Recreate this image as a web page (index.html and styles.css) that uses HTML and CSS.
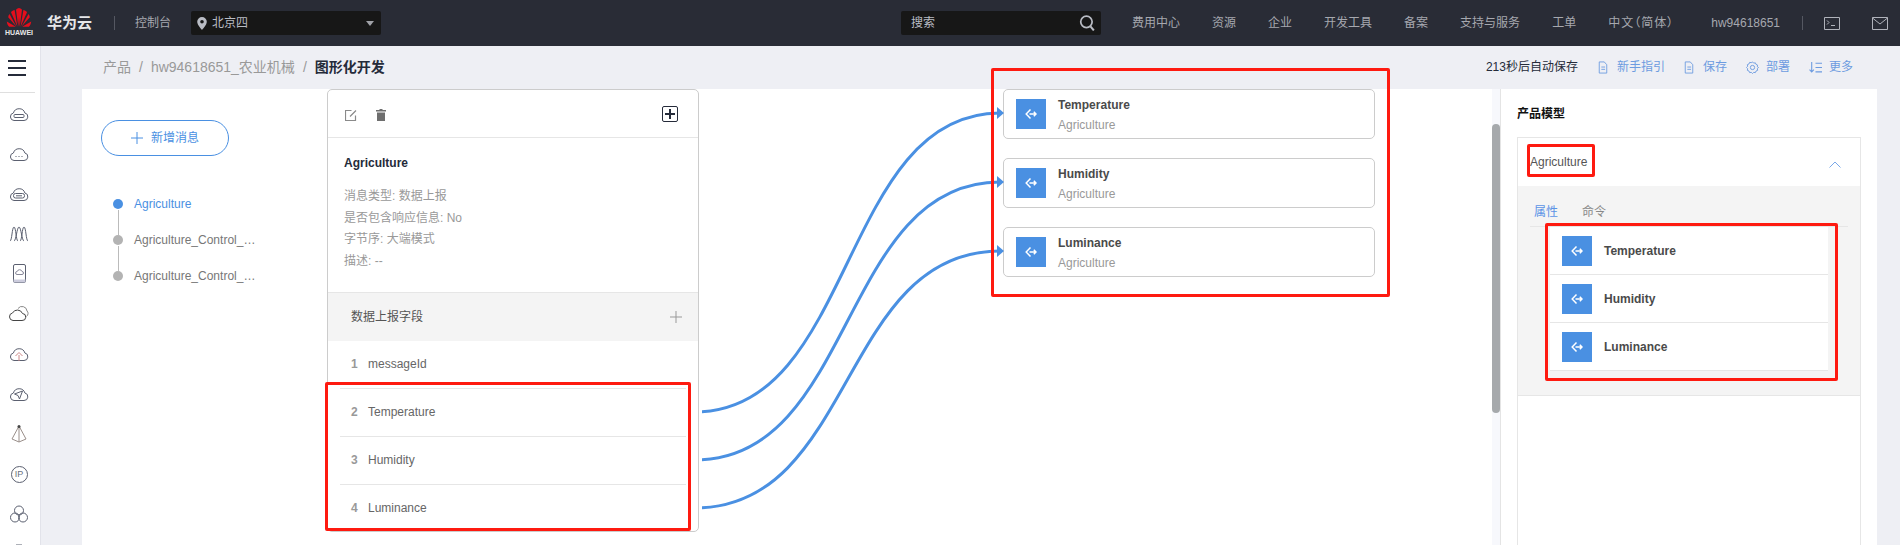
FILE: index.html
```html
<!DOCTYPE html>
<html lang="zh">
<head>
<meta charset="utf-8">
<title>图形化开发</title>
<link rel="stylesheet" href="styles.css">
</head>
<body>
<svg class="defs" width="0" height="0" aria-hidden="true">
  <defs>
    <symbol id="prop" viewBox="0 0 12 12">
      <path d="M5.500 1.500 1.200 6l4.300 4.500M4.500 6H11M8.800 3.800 11 6 8.800 8.200" fill="none" stroke="#fff" stroke-width="1.500"/>
    </symbol>
    <symbol id="cloud" viewBox="0 0 20 16">
      <path d="M5 14.500h10a3.800 3.800 0 0 0 .9-7.500A6 6 0 0 0 4.400 7 3.800 3.800 0 0 0 5 14.500z" fill="none" stroke="#5b6070"/>
    </symbol>
    <symbol id="doc" viewBox="0 0 12 14" preserveAspectRatio="none">
      <path d="M1.500 1h6l3 3v9h-9zM4 6.500h4.500M4 9h4.500" fill="none" stroke="#6c9be0"/>
    </symbol>
  </defs>
</svg>

<header class="topbar">
  <div class="brand">
    <svg class="logo" viewBox="0 0 26 17" preserveAspectRatio="none" aria-hidden="true">
      <g fill="#e60f1d">
        <path d="M12.300 16 10 1.500C11 .5 12 .2 13 0c.5 3-.2 11-.7 16z"/>
        <path d="M13.700 16 16 1.500c-1-1-2-1.300-3-1.500-.5 3 .2 11 .7 16z"/>
        <path d="M11.400 16 5 3.600C6 2.600 7.400 2 8.600 1.800z"/>
        <path d="M14.600 16 21 3.600C20 2.600 18.600 2 17.400 1.800z"/>
        <path d="M10.500 16 2.200 7.800C2.300 6.800 2.700 6 3.500 5.200z"/>
        <path d="M15.500 16l8.300-8.200c-.1-1-.5-1.800-1.300-2.600z"/>
        <path d="M9.800 16 .8 11.500c.1 1.500.8 3 2.300 4.500z"/>
        <path d="M16.200 16l9-4.500c-.1 1.500-.8 3-2.300 4.500z"/>
      </g>
    </svg>
    <span class="logo-word">HUAWEI</span>
  </div>
  <span class="cloud-name">华为云</span>
  <span class="bar-rule"></span>
  <span class="console">控制台</span>
  <div class="region">
    <svg class="pin" viewBox="0 0 10 13" aria-hidden="true"><path d="M5 0a4.800 4.800 0 0 0-4.800 4.800C.2 8 5 13 5 13s4.800-5 4.800-8.200A4.800 4.800 0 0 0 5 0zm0 6.600a1.800 1.800 0 1 1 0-3.600 1.800 1.800 0 0 1 0 3.600z" fill="#b9bcc4"/></svg>
    <span class="region-name">北京四</span>
    <span class="caret"></span>
  </div>
  <div class="search">
    <span>搜索</span>
    <svg class="mag" viewBox="0 0 14 14" aria-hidden="true"><circle cx="6.500" cy="6" r="5" fill="none" stroke="#b9bcc4" stroke-width="1.500"/><path d="m10 10 3 3.500" stroke="#b9bcc4" stroke-width="1.800"/></svg>
  </div>
  <nav class="nav">
    <a>费用中心</a><a>资源</a><a>企业</a><a>开发工具</a><a>备案</a><a>支持与服务</a><a>工单</a><a class="lang">中文（简体）</a>
  </nav>
  <span class="user">hw94618651</span>
  <span class="bar-rule user-rule"></span>
  <svg class="bar-icon term" viewBox="0 0 16 13" aria-hidden="true"><path d="M.5.500h15v12H.5zM3 3.500l2 2-2 2M7 8.500h4" fill="none" stroke="#b0b3bb"/></svg>
  <svg class="bar-icon" viewBox="0 0 16 13" aria-hidden="true"><path d="M.5.500h15v12H.5zM.5 1l7.500 6 7.500-6" fill="none" stroke="#b0b3bb"/></svg>
</header>

<div class="shell">
  <aside class="side">
    <div class="burger"><i></i><i></i><i></i></div>
    <div class="side-rule"></div>
    <ul class="side-icons">
      <li><svg viewBox="0 0 20 16"><use href="#cloud"/><rect x="5" y="8.500" width="10" height="3" rx="1" fill="none" stroke="#5b6070"/></svg></li>
      <li><svg viewBox="0 0 20 16"><use href="#cloud"/><path d="M6.500 10.500h1M9.500 10.500h1M12.500 10.500h1" stroke="#5b6070"/></svg></li>
      <li><svg viewBox="0 0 20 16"><use href="#cloud"/><rect x="4.500" y="7.500" width="11" height="4.500" rx="2" fill="none" stroke="#5b6070"/><path d="M7 9.800h6" stroke="#5b6070"/></svg></li>
      <li><svg viewBox="0 0 20 16"><path d="M1 15C3 15 3 1 5 1s2 14 4 14M5 15C7 15 8 1 10 1s3 14 5 14M11 15c2 0 2-14 4-14s2 14 4 14" fill="none" stroke="#5b6070"/></svg></li>
      <li><svg viewBox="0 0 20 20"><rect x="4.500" y=".5" width="12" height="18" rx="1.500" fill="none" stroke="#5b6070"/><path d="M4.500 15.500h12v3h-12z" fill="#ccd"/><path d="M8 10.500h5a1.500 1.500 0 0 0 0-3 2.500 2.500 0 0 0-4.800 0A1.500 1.500 0 0 0 8 10.500z" fill="none" stroke="#889"/></svg></li>
      <li><svg viewBox="0 0 20 16"><path d="M4 14.500h9a3.500 3.500 0 0 0 .5-7A5.500 5.500 0 0 0 3.500 7 3.800 3.800 0 0 0 4 14.500z" fill="none" stroke="#444"/><path d="M9 2.500a5 5 0 0 1 9 2.500c1.500 1 1.500 4-.5 5.500" fill="none" stroke="#888"/></svg></li>
      <li><svg viewBox="0 0 20 16"><use href="#cloud"/><path d="M10 15V9M6.500 10 10 6.500l3.500 3.500" fill="none" stroke="#c88"/></svg></li>
      <li><svg viewBox="0 0 20 16"><use href="#cloud"/><path d="m5.500 8 8-3-3 8-1.500-3.500z" fill="none" stroke="#5b6070"/></svg></li>
      <li><svg viewBox="0 0 20 20"><path d="M10 2 3 15l7 3 7-3zM10 2v16" fill="none" stroke="#9a8f8a"/><circle cx="10" cy="2.500" r="1.500" fill="#444"/></svg></li>
      <li class="ip"><span>IP</span></li>
      <li><svg viewBox="0 0 20 20"><circle cx="10" cy="6.500" r="4.500" fill="none" stroke="#5b6070"/><circle cx="6" cy="13.500" r="4.500" fill="none" stroke="#5b6070"/><circle cx="14" cy="13.500" r="4.500" fill="none" stroke="#5b6070"/></svg></li>
      <li><svg viewBox="0 0 20 20"><path d="M7 1h6" stroke="#5b6070"/></svg></li>
    </ul>
  </aside>

  <main class="page">
    <div class="crumbs">
      <nav class="trail">
        <span>产品</span><span class="slash">/</span><span>hw94618651_农业机械</span><span class="slash">/</span><strong>图形化开发</strong>
      </nav>
      <div class="actions">
        <span class="autosave">213秒后自动保存</span>
        <a class="act first"><svg class="act-icon"><use href="#doc" width="10" height="13"/></svg>新手指引</a>
        <a class="act"><svg class="act-icon"><use href="#doc" width="10" height="13"/></svg>保存</a>
        <a class="act"><svg class="act-icon wide" viewBox="0 0 14 14"><path d="M7 1l1.300 1.300 1.800-.3.700 1.700 1.700.7-.3 1.800L13.500 7l-1.300 1.300.3 1.800-1.700.7-.7 1.700-1.800-.3L7 13.500l-1.300-1.300-1.800.3-.7-1.700-1.700-.7.3-1.800L.5 7l1.300-1.300-.3-1.800 1.700-.7.7-1.700 1.800.3z" fill="none" stroke="#6c9be0"/><circle cx="7" cy="7" r="2.300" fill="none" stroke="#6c9be0"/></svg>部署</a>
        <a class="act"><svg class="act-icon wide" viewBox="0 0 12 12"><path d="M2.500 1v9M.5 8l2 2.200L4.500 8M6 2h6M6 6h6M6 10h6" fill="none" stroke="#6c9be0"/></svg>更多</a>
      </div>
    </div>

    <section class="panel">
      <div class="canvas">
        <div class="msgs">
          <button class="add-btn"><svg class="add-plus" viewBox="0 0 12 12"><path d="M6 0v12M0 6h12" stroke="#4a90e2"/></svg>新增消息</button>
          <ul class="steps">
            <li class="step on">Agriculture</li>
            <li class="step">Agriculture_Control_…</li>
            <li class="step">Agriculture_Control_…</li>
          </ul>
        </div>

        <article class="card">
          <div class="card-tools">
            <svg class="tool" viewBox="0 0 12 12"><path d="M10.500 6.500v5h-10v-10h6M5 7.500l6-6" fill="none" stroke="#8a8a8a" stroke-width="1.200"/></svg>
            <svg class="tool trash" viewBox="0 0 10 12"><path d="M3.500 0h3v1H10v1.500H0V1h3.500zM1 3.500h8V12H1z" fill="#6e6e6e"/></svg>
            <span class="plus-box"></span>
          </div>
          <div class="card-info">
            <h3 class="info-title">Agriculture</h3>
            <p>消息类型: 数据上报</p>
            <p>是否包含响应信息: No</p>
            <p>字节序: 大端模式</p>
            <p>描述: --</p>
          </div>
          <div class="card-sec">
            <span>数据上报字段</span>
            <svg class="sec-plus" viewBox="0 0 12 12"><path d="M6 0v12M0 6h12" stroke="#999"/></svg>
          </div>
          <ol class="fields">
            <li><b>1</b>messageId</li>
            <li><b>2</b>Temperature</li>
            <li><b>3</b>Humidity</li>
            <li><b>4</b>Luminance</li>
          </ol>
        </article>

        <div class="targets">
          <div class="target">
            <svg class="prop"><use href="#prop" x="9" y="9" width="12" height="12"/></svg>
            <div class="t-text"><div class="t-name">Temperature</div><div class="t-sub">Agriculture</div></div>
          </div>
          <div class="target">
            <svg class="prop"><use href="#prop" x="9" y="9" width="12" height="12"/></svg>
            <div class="t-text"><div class="t-name">Humidity</div><div class="t-sub">Agriculture</div></div>
          </div>
          <div class="target">
            <svg class="prop"><use href="#prop" x="9" y="9" width="12" height="12"/></svg>
            <div class="t-text"><div class="t-name">Luminance</div><div class="t-sub">Agriculture</div></div>
          </div>
        </div>

        <div class="track"><div class="thumb"></div></div>
      </div>

      <aside class="model">
        <h4 class="model-title">产品模型</h4>
        <div class="acc">
          <div class="acc-head">
            <span>Agriculture</span>
            <svg class="chev" viewBox="0 0 12 7"><path d="M.5 6.500 6 1l5.500 5.500" fill="none" stroke="#7aa8e8"/></svg>
          </div>
          <div class="acc-body">
            <div class="tabs"><span class="tab on">属性</span><span class="tab">命令</span></div>
            <ul class="props">
              <li><svg class="prop"><use href="#prop" x="9" y="9" width="12" height="12"/></svg>Temperature</li>
              <li><svg class="prop"><use href="#prop" x="9" y="9" width="12" height="12"/></svg>Humidity</li>
              <li><svg class="prop"><use href="#prop" x="9" y="9" width="12" height="12"/></svg>Luminance</li>
            </ul>
          </div>
        </div>
      </aside>
    </section>
  </main>
</div>

<svg class="links" viewBox="702 89 310 456" aria-hidden="true">
  <g fill="none" stroke="#4a90e2" stroke-width="3">
    <path d="M695 412C855 412 840 113 1000 113"/>
    <path d="M695 460C855 460 840 182 1000 182"/>
    <path d="M695 508C855 508 840 251 1000 251"/>
  </g>
  <g fill="#4a90e2">
    <path d="M997 107l7 6-7 6z"/>
    <path d="M997 176l7 6-7 6z"/>
    <path d="M997 245l7 6-7 6z"/>
  </g>
</svg>

<div class="mark mark-a"></div>
<div class="mark mark-b"></div>
<div class="mark mark-c"></div>
<div class="mark mark-d"></div>
</body>
</html>
```

FILE: styles.css
```css
* { box-sizing: border-box; }
html, body { margin: 0; height: 545px; overflow: hidden; }
body {
  font: 12px/1.2 "Liberation Sans", "Noto Sans CJK SC", sans-serif;
  color: #555;
  background: #eeeff4;
}
ul, ol { list-style: none; margin: 0; padding: 0; }
h3, h4, p { margin: 0; }
.defs { position: absolute; }

/* top bar */
.topbar {
  height: 46px;
  background: #292c36;
  display: flex;
  align-items: center;
  padding: 0 12px 0 6px;
  color: #b4b6bd;
}
.brand { width: 26px; display: flex; flex-direction: column; align-items: center; margin-top: -2px; }
.logo { width: 26px; height: 20px; display: block; }
.logo-word { font-size: 7px; line-height: 9px; font-weight: 700; color: #e8e8e8; white-space: nowrap; }
.cloud-name { margin-left: 15px; font-size: 15px; font-weight: 700; color: #e6e7ea; }
.bar-rule { width: 1px; height: 14px; background: #555862; margin-left: 22px; }
.console { margin-left: 20px; color: #a6a8af; }
.region {
  margin-left: 20px;
  width: 190px;
  height: 24px;
  background: #171717;
  border-radius: 2px;
  display: flex;
  align-items: center;
  padding: 0 7px 0 6px;
}
.pin { width: 10px; height: 13px; }
.region-name { margin-left: 5px; flex: 1; color: #b9bcc4; }
.caret { width: 0; height: 0; border: 4px solid transparent; border-top: 5px solid #a0a2a8; border-bottom: 0; }
.search {
  margin-left: 520px;
  width: 200px;
  height: 24px;
  background: #171717;
  border-radius: 2px;
  display: flex;
  align-items: center;
  justify-content: space-between;
  padding: 0 6px 0 10px;
  color: #b9bcc4;
}
.mag { width: 16px; height: 16px; }
.nav { margin-left: 31px; display: flex; gap: 32px; color: #a6a8af; white-space: nowrap; }
.lang { font-feature-settings: "palt"; letter-spacing: 1px; }
.user { margin-left: auto; color: #a6a8af; }
.user-rule { margin-left: 22px; }
.bar-icon { width: 16px; height: 13px; margin-left: 32px; }
.term { margin-left: 21px; }

/* shell */
.shell { display: flex; height: 499px; }
.side {
  width: 41px;
  flex: none;
  background: #fff;
  border-right: 1px solid #e2e3ea;
  overflow: hidden;
}
.burger { height: 46px; padding: 14px 0 0 8px; }
.burger i { display: block; width: 18px; height: 2px; background: #252b3a; margin-bottom: 5px; }
.side-rule { width: 35px; height: 1px; background: #dfdfdf; }
.side-icons { padding-top: 1px; }
.side-icons li { height: 40px; display: flex; align-items: center; justify-content: center; padding-right: 2px; }
.side-icons svg { width: 20px; height: 20px; display: block; }
.ip span {
  width: 17px; height: 17px; border: 1px solid #5b6070; border-radius: 50%;
  font-size: 9px; line-height: 15px; text-align: center; color: #6a6f7e;
}

.page { flex: 1; min-width: 0; display: flex; flex-direction: column; padding: 0 23px 0 41px; }
.crumbs { height: 43px; flex: none; display: flex; align-items: center; justify-content: space-between; padding: 0 24px 0 21px; }
.trail { font-size: 14px; color: #999; display: flex; align-items: center; white-space: nowrap; }
.slash { margin: 0 8px; }
.trail strong { color: #252b3a; font-weight: 700; }
.actions { display: flex; align-items: center; white-space: nowrap; }
.autosave { color: #252b3a; }
.act { display: flex; align-items: center; color: #6c9be0; margin-left: 19px; }
.act.first { margin-left: 20px; }
.act-icon { width: 10px; height: 13px; margin-right: 9px; }
.act-icon.wide { width: 13px; height: 13px; margin-right: 7px; }

/* panel */
.panel { flex: 1; min-height: 0; background: #fff; display: flex; }
.canvas { flex: 1; min-width: 0; display: flex; align-items: flex-start; height: 100%; }

.msgs { width: 245px; flex: none; padding: 31px 0 0 19px; }
.add-btn {
  width: 128px;
  height: 36px;
  border: 1px solid #4a90e2;
  border-radius: 18px;
  background: #fff;
  color: #4a90e2;
  font: inherit;
  display: flex;
  align-items: center;
  padding: 0 0 0 29px;
}
.add-plus { width: 12px; height: 12px; margin-right: 8px; }
.steps { margin-top: 30px; padding-left: 12px; }
.step {
  position: relative;
  height: 36px;
  padding-left: 21px;
  line-height: 36px;
  color: #777;
  white-space: nowrap;
}
.step::before { content: ""; position: absolute; left: 0; top: 13px; width: 10px; height: 10px; border-radius: 50%; background: #b3b3b3; }
.step:not(:last-child)::after { content: ""; position: absolute; left: 5px; top: 24px; width: 1px; height: 25px; background: #bbb; }
.step.on { color: #4a90e2; }
.step.on::before { background: #4a90e2; }

.card {
  width: 372px;
  flex: none;
  height: 443px;
  background: #fff;
  border: 1px solid #ccc;
  border-radius: 5px;
}
.card-tools { height: 48px; border-bottom: 1px solid #e6e6e6; display: flex; align-items: center; padding: 0 20px 0 17px; }
.tool { width: 12px; height: 12px; margin-top: 2px; }
.trash { width: 10px; margin-left: 19px; }
.plus-box { margin-left: auto; margin-top: 1px; width: 16px; height: 16px; border: 1px solid #252b3a; border-radius: 2px; position: relative; }
.plus-box::before { content: ""; position: absolute; left: 2px; right: 2px; top: 6px; height: 2px; background: #252b3a; }
.plus-box::after { content: ""; position: absolute; top: 2px; bottom: 2px; left: 6px; width: 2px; background: #252b3a; }
.card-info { height: 154px; padding: 17px 16px 0; color: #999; }
.info-title { font-size: 12px; font-weight: 700; color: #252b3a; line-height: 16px; margin-bottom: 15px; }
.card-info p { line-height: 21.700px; }
.card-sec {
  height: 49px;
  background: #f4f4f4;
  border-top: 1px solid #e6e6e6;
  display: flex;
  align-items: center;
  justify-content: space-between;
  padding: 0 16px 0 23px;
  color: #555;
}
.sec-plus { width: 12px; height: 12px; }
.fields { padding: 0 12px; }
.fields li {
  height: 48px;
  display: flex;
  align-items: center;
  padding-left: 11px;
  border-bottom: 1px solid #e6e6e6;
  color: #666;
}
.fields li:last-child { border-bottom: 0; padding-bottom: 1px; }
.fields b { width: 17px; color: #999; }

.targets { flex: none; width: 372px; margin-left: 304px; display: flex; flex-direction: column; gap: 19px; }
.target {
  height: 50px;
  border: 1px solid #ccc;
  border-radius: 5px;
  background: #fff;
  display: flex;
  align-items: center;
  padding-left: 12px;
}
.prop { width: 30px; height: 30px; background: #4a90e2; flex: none; display: block; }
.target .prop { margin-right: 12px; }
.t-text { padding-top: 1px; }
.t-name { font-weight: 700; color: #4a4a4a; line-height: 16px; }
.t-sub { color: #999; line-height: 16px; margin-top: 4px; }

.track { margin-left: auto; width: 8px; height: 100%; background: #f7f8fc; padding-top: 35px; flex: none; }
.thumb { height: 289px; background: #a6a9ac; border-radius: 4px; }

.model { width: 377px; flex: none; border-left: 1px solid #e4e4e4; padding: 0 16px; height: 100%; overflow: hidden; }
.model-title { font-size: 12px; font-weight: 700; color: #111; line-height: 16px; padding-top: 17px; margin-bottom: 15px; box-sizing: content-box; }
.acc { height: 430px; border: 1px solid #e6e6e6; }
.acc-head { height: 48px; display: flex; align-items: center; justify-content: space-between; padding: 0 19px 0 12px; color: #555; }
.chev { width: 12px; height: 7px; margin-top: 5px; }
.acc-body { height: 210px; background: #f4f4f4; padding: 0 12px; border-bottom: 1px solid #e6e6e6; }
.tabs { height: 41px; display: flex; align-items: flex-end; gap: 24px; padding: 0 4px 7px; border-bottom: 1px solid #e6e6e6; color: #888; }
.tab.on { color: #5b93e6; }
.props { margin-left: 20px; width: 278px; background: #fff; }
.props li {
  height: 48px;
  display: flex;
  align-items: center;
  padding: 2px 12px 0;
  gap: 12px;
  border-bottom: 1px solid #e6e6e6;
  font-weight: 700;
  color: #4a4a4a;
}
.props .prop { margin-top: -2px; }

/* overlays */
.links { position: absolute; left: 702px; top: 89px; width: 310px; height: 456px; pointer-events: none; }
.mark { position: absolute; border: 3px solid #fe1a10; border-radius: 2px; pointer-events: none; }
.mark-a { left: 991px; top: 68px; width: 399px; height: 229px; }
.mark-b { left: 325px; top: 382px; width: 366px; height: 149px; }
.mark-c { left: 1527px; top: 144px; width: 68px; height: 33px; }
.mark-d { left: 1545px; top: 223px; width: 293px; height: 158px; }
```
